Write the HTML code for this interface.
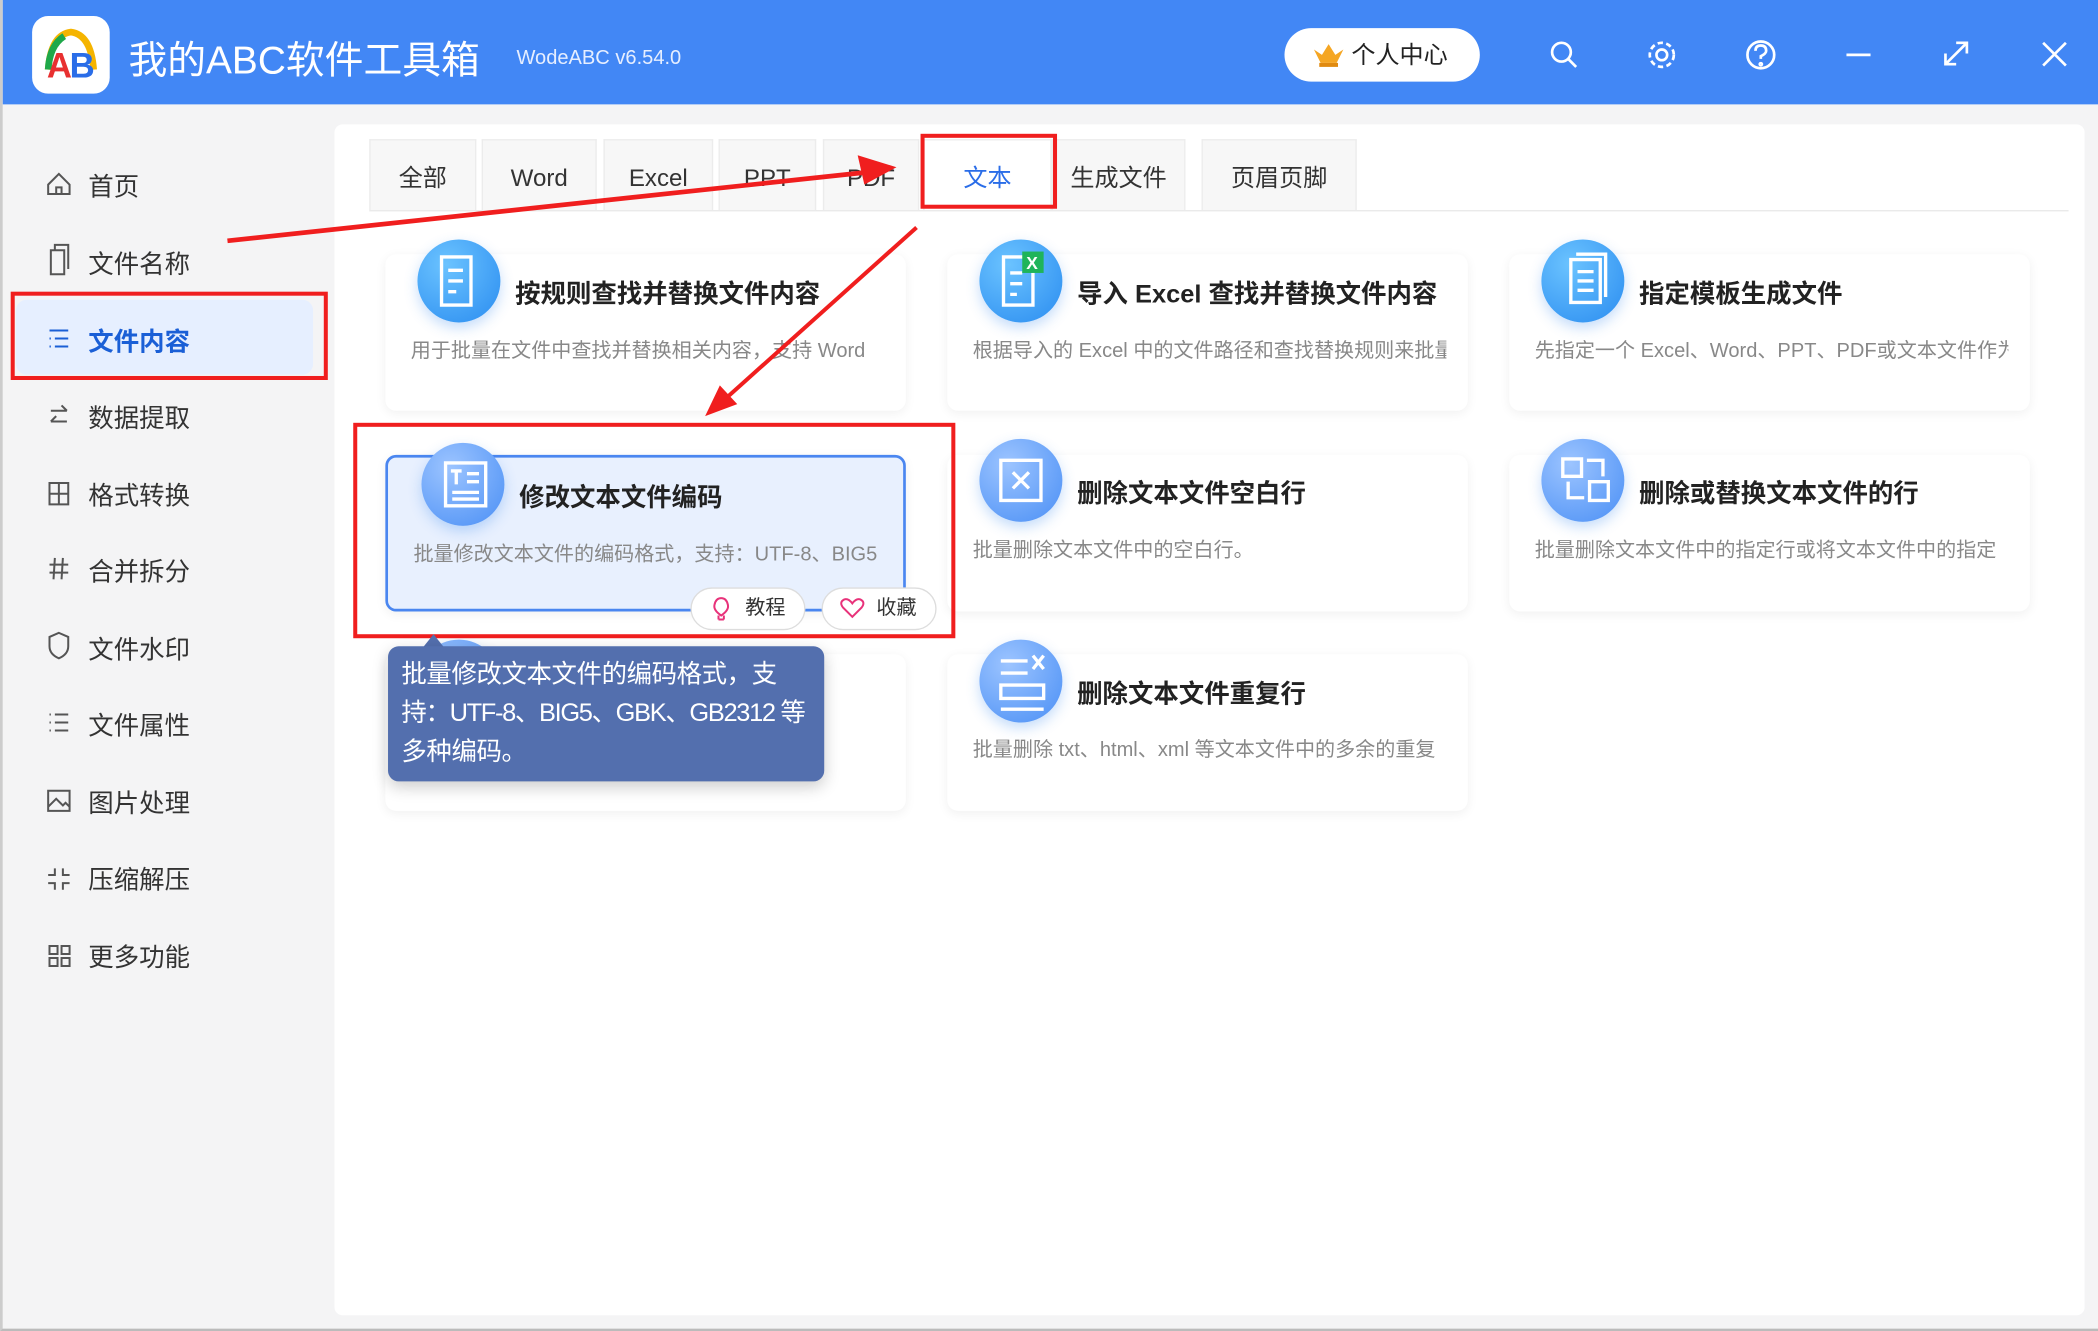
<!DOCTYPE html>
<html><head><meta charset="utf-8">
<style>
*{margin:0;padding:0;box-sizing:border-box}
html,body{width:2098px;height:1331px;overflow:hidden;background:#fff}
body{font-family:"Liberation Sans","Noto Sans CJK SC",sans-serif}
#s{position:absolute;left:0;top:0;width:1568px;height:995px;transform:scale(1.33801);transform-origin:0 0;background:#f4f4f5;border-left:2px solid #ccc;border-bottom:2px solid #bbb;overflow:hidden}
.a{position:absolute}
.top{left:0;top:0;width:1568px;height:78px;background:#4287f5}
.logo{left:22px;top:12px;width:58px;height:58px;background:#fff;border-radius:12px}
.t1{left:94px;top:22px;font-size:29px;color:#fff;white-space:nowrap}
.t2{left:384px;top:35px;font-size:15px;color:#e6eeff}
.pc{left:958px;top:21px;width:146px;height:40px;background:#fff;border-radius:20px;font-size:18px;color:#222;line-height:40px;padding-left:50px}
.side{font-size:19px;color:#333;left:64px}
.panel{left:248px;top:93px;width:1308px;height:890px;background:#fff;border-radius:6px}
.tab{top:104px;height:53px;background:#f7f7f7;border:1px solid #ececec;border-bottom:none;font-size:18px;color:#333;text-align:center;line-height:56px}
.card{width:389px;height:117px;background:#fff;border-radius:8px;box-shadow:0 2px 8px rgba(0,0,0,.06)}
.ic{width:62px;height:62px;border-radius:50%;background:radial-gradient(circle at 35% 30%,#6bc3ff,#2a8cf0);box-shadow:0 4px 10px rgba(60,140,240,.3)}
.ic2{background:radial-gradient(circle at 35% 30%,#9cc4ff,#4a8ff5)}
.ct{font-size:19px;font-weight:bold;color:#222;white-space:nowrap}
.cd{font-size:15px;color:#888;white-space:nowrap;overflow:hidden}
.red{border:3px solid #f01e1e}
.btn{top:439px;height:32px;width:86px;background:#fff;border:1px solid #ddd;border-radius:16px;font-size:15px;color:#333;line-height:30px;padding-left:40px}
</style></head><body><div id="s">
<div class="a top"></div>
<div class="a logo"><svg width="58" height="58"><path d="M12 40 Q14 14 29 12 Q44 14 46 40" fill="none" stroke="#f5b400" stroke-width="5"/><path d="M12 40 Q13 22 24 15" fill="none" stroke="#1fa84a" stroke-width="5"/><text x="11" y="46" font-size="26" font-weight="bold" fill="#e83030" font-family="Liberation Sans">A</text><text x="28" y="46" font-size="26" font-weight="bold" fill="#2a6de8" font-family="Liberation Sans">B</text></svg></div>
<div class="a t1">我的ABC软件工具箱</div>
<div class="a t2">WodeABC v6.54.0</div>
<div class="a pc"><svg class="a" style="left:20px;top:10px" width="26" height="20"><path d="M2 6 L7 16 L19 16 L24 6 L18 10 L13 2 L8 10 Z" fill="#f5a623"/><rect x="6" y="16" width="14" height="3" fill="#e08a10"/></svg>个人中心</div>
<svg class="a" style="left:1150px;top:24px" width="400" height="36" fill="none" stroke="#fff" stroke-width="2">
<circle cx="15" cy="15" r="7"/><path d="M20 20 L26 26"/>
<circle cx="90" cy="17" r="4"/><circle cx="90" cy="17" r="9" stroke-dasharray="4 2.5"/>
<circle cx="164" cy="17" r="10"/><path d="M160 14 Q160 10 164 10 Q168 10 168 14 Q168 16 164 18 V20"/><circle cx="164" cy="24" r=".8"/>
<path d="M228 17 H246"/>
<path d="M302 24 L318 8 M310 8 H318 V16 M302 16 V24 H310"/>
<path d="M375 8 L392 25 M392 8 L375 25"/>
</svg>
<div class="a" style="left:10px;top:224px;width:222px;height:56px;background:#e6efff;border-radius:8px"></div>
<div class="a side" style="top:125px">首页</div>
<div class="a side" style="top:183px">文件名称</div>
<div class="a side" style="top:241px;color:#1a5fd6;font-weight:bold">文件内容</div>
<div class="a side" style="top:298px">数据提取</div>
<div class="a side" style="top:356px">格式转换</div>
<div class="a side" style="top:413px">合并拆分</div>
<div class="a side" style="top:471px">文件水印</div>
<div class="a side" style="top:528px">文件属性</div>
<div class="a side" style="top:586px">图片处理</div>
<div class="a side" style="top:643px">压缩解压</div>
<div class="a side" style="top:701px">更多功能</div>
<svg class="a" style="left:31px;top:125px" width="24" height="600" fill="none" stroke="#555" stroke-width="1.5">
<path d="M3 13 L11 5 L19 13 V20 H3 Z M9 20 V15 H13 V20"/>
<path d="M5 62 H15 V80 H5 Z M8 62 V58 H18 V76"/>
<path d="M4 122 H18 M8 128 H18 M8 134 H18 M4 128 H5 M4 134 H5" stroke="#1a5fd6"/>
<path d="M5 182 H17 M13 178 L17 182 M5 190 H17 M5 190 L9 186"/>
<path d="M4 236 H18 V252 H4 Z M11 236 V252 M4 244 H18"/>
<path d="M8 292 L7 308 M14 292 L13 308 M4 297 H18 M4 303 H18"/>
<path d="M11 348 L18 351 V358 Q18 364 11 367 Q4 364 4 358 V351 Z"/>
<path d="M4 409 H5 M8 409 H18 M4 415 H5 M8 415 H18 M4 421 H5 M8 421 H18"/>
<path d="M3 466 H19 V481 H3 Z M3 478 L9 472 L14 477 L16 475 L19 478"/>
<path d="M8 524 V529 H3 M14 524 V529 H19 M8 540 V535 H3 M14 540 V535 H19"/>
<path d="M4 582 H10 V588 H4 Z M13 582 H19 V588 H13 Z M4 591 H10 V597 H4 Z M13 591 H19 V597 H13 Z"/>
</svg>
<div class="a red" style="left:6px;top:218px;width:237px;height:66px"></div>
<div class="a panel"></div>
<div class="a" style="left:274px;top:157px;width:1270px;height:1px;background:#e8e8e8"></div>
<div class="a tab" style="left:274px;width:80px">全部</div>
<div class="a tab" style="left:358px;width:86px">Word</div>
<div class="a tab" style="left:449px;width:82px">Excel</div>
<div class="a tab" style="left:535px;width:73px">PPT</div>
<div class="a tab" style="left:613px;width:72px">PDF</div>
<div class="a tab" style="left:688px;width:96px;background:#fff;color:#2a6de8">文本</div>
<div class="a tab" style="left:784px;width:100px">生成文件</div>
<div class="a tab" style="left:896px;width:116px">页眉页脚</div>
<div class="a red" style="left:686px;top:100px;width:102px;height:56px"></div>

<div class="a card" style="left:286px;top:190px"></div>
<div class="a card" style="left:706px;top:190px"></div>
<div class="a card" style="left:1126px;top:190px"></div>
<div class="a card" style="left:286px;top:340px;background:#e8f0fe;border:2px solid #4a86f0"></div>
<div class="a card" style="left:706px;top:340px"></div>
<div class="a card" style="left:1126px;top:340px"></div>
<div class="a card" style="left:286px;top:489px"></div>
<div class="a card" style="left:706px;top:489px"></div>

<div class="a ic" style="left:310px;top:179px"></div>
<div class="a ic" style="left:730px;top:179px"></div>
<div class="a ic" style="left:1150px;top:179px"></div>
<div class="a ic ic2" style="left:313px;top:331px"></div>
<div class="a ic ic2" style="left:730px;top:328px"></div>
<div class="a ic ic2" style="left:1150px;top:328px"></div>
<div class="a ic ic2" style="left:310px;top:478px"></div>
<div class="a ic ic2" style="left:730px;top:478px"></div>
<svg class="a" style="left:-2px;top:0" width="1568" height="995" fill="none" stroke="#fff" stroke-width="2.5">
<path d="M330 192 H352 V228 H330 Z M335 202 H346 M335 210 H346 M335 218 H341"/>
<path d="M750 192 H772 V228 H750 Z M755 204 H764 M755 212 H764 M755 220 H760"/><rect x="764" y="188" width="16" height="16" fill="#1fb45a" stroke="none"/><text x="767" y="201" font-size="13" fill="#fff" stroke="none" font-weight="bold">X</text>
<path d="M1174 194 H1196 V226 H1174 Z M1178 190 H1200 V222 M1179 203 H1191 M1179 210 H1191 M1179 217 H1191"/>
<path d="M333 346 H363 V378 H333 Z M337 352 H345 M341 352 V362 M349 354 H358 M349 360 H358 M338 368 H358 M338 373 H358"/>
<path d="M748 344 H778 V374 H748 Z M757 353 L769 365 M769 353 L757 365"/>
<path d="M1168 343 H1182 V356 H1168 Z M1188 360 H1202 V374 H1188 Z M1172 360 V372 H1184 M1198 356 V344 H1186"/>
<path d="M748 494 H768 M748 503 H768 M748 512 H780 V522 H748 Z M748 530 H780 M772 490 L780 500 M780 490 L772 500"/>
</svg>
<div class="a ct" style="left:383px;top:205px">按规则查找并替换文件内容</div>
<div class="a ct" style="left:803px;top:205px">导入 Excel 查找并替换文件内容</div>
<div class="a ct" style="left:1223px;top:205px">指定模板生成文件</div>
<div class="a ct" style="left:386px;top:357px">修改文本文件编码</div>
<div class="a ct" style="left:803px;top:354px">删除文本文件空白行</div>
<div class="a ct" style="left:1223px;top:354px">删除或替换文本文件的行</div>
<div class="a ct" style="left:383px;top:504px">按规则删除文本文件中的行</div>
<div class="a ct" style="left:803px;top:504px">删除文本文件重复行</div>
<div class="a cd" style="left:305px;top:251px;width:354px">用于批量在文件中查找并替换相关内容，支持 Word</div>
<div class="a cd" style="left:725px;top:251px;width:354px">根据导入的 Excel 中的文件路径和查找替换规则来批量</div>
<div class="a cd" style="left:1145px;top:251px;width:354px">先指定一个 Excel、Word、PPT、PDF或文本文件作为</div>
<div class="a cd" style="left:307px;top:403px;width:350px">批量修改文本文件的编码格式，支持：UTF-8、BIG5</div>
<div class="a cd" style="left:725px;top:400px;width:354px">批量删除文本文件中的空白行。</div>
<div class="a cd" style="left:1145px;top:400px;width:354px">批量删除文本文件中的指定行或将文本文件中的指定</div>
<div class="a cd" style="left:725px;top:549px;width:354px">批量删除 txt、html、xml 等文本文件中的多余的重复</div>
<div class="a btn" style="left:514px">教程</div>
<div class="a btn" style="left:612px">收藏</div>
<svg class="a" style="left:528px;top:445px" width="120" height="22" fill="none" stroke="#e8327a" stroke-width="1.5">
<path d="M9 15 Q3 11 4 7 Q5 2 9 2 Q13 2 14 7 Q15 11 9 15 Z M7 18 H11 M7 15 V18 M11 15 V18"/>
<path d="M107 16 L100 9 Q97 5 101 3 Q104 2 107 6 Q110 2 113 3 Q117 5 114 9 Z"/>
</svg>
<div class="a red" style="left:262px;top:316px;width:450px;height:161px"></div>
<div class="a" style="left:314px;top:474px;width:0;height:0;border-left:8px solid transparent;border-right:8px solid transparent;border-bottom:10px solid #536fae"></div>
<div class="a" style="left:288px;top:483px;width:326px;height:101px;background:#536fae;border-radius:8px;color:#fff;font-size:19px;line-height:29px;padding:7px 10px;box-shadow:0 4px 12px rgba(0,0,0,.2);white-space:nowrap;letter-spacing:-0.3px">批量修改文本文件的编码格式，支<br><span style="letter-spacing:-1px">持：UTF-8、BIG5、GBK、GB2312 等</span><br>多种编码。</div>
<svg class="a" style="left:-2px;top:0" width="1568" height="995">
<path d="M170 180 L655 128" stroke="#f01e1e" stroke-width="3.5"/>
<path d="M670 125 L641 116 L646 138 Z" fill="#f01e1e"/>
<path d="M685 170 L540 300" stroke="#f01e1e" stroke-width="3"/>
<path d="M527 311 L538 288 L551 302 Z" fill="#f01e1e"/>
</svg>
</div></body></html>
